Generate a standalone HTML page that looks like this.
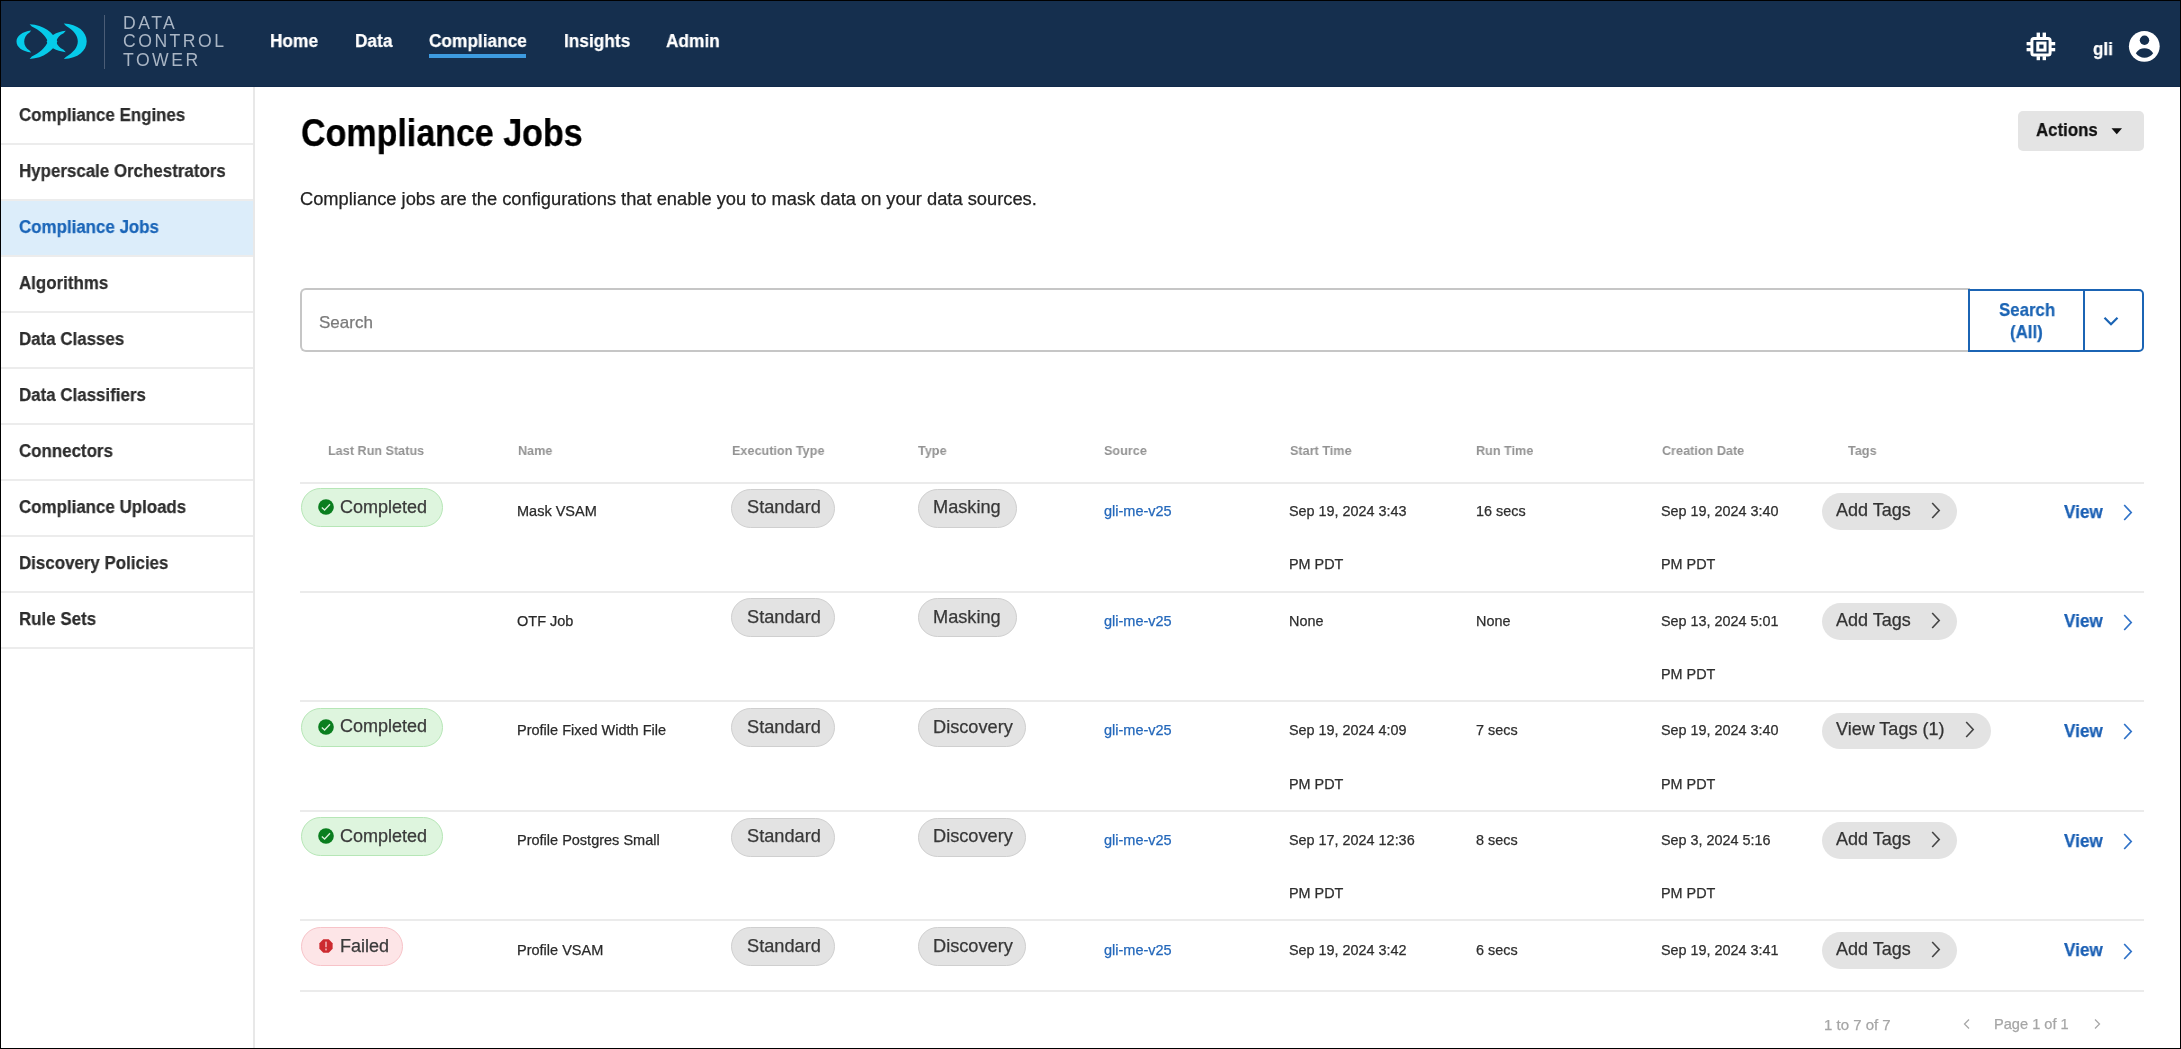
<!DOCTYPE html>
<html><head><meta charset="utf-8">
<title>Compliance Jobs</title>
<style>
html,body{margin:0;padding:0;}
body{width:2181px;height:1049px;overflow:hidden;position:relative;background:#fff;font-family:"Liberation Sans",sans-serif;color:#2e2e2e;}
.t{position:absolute;line-height:1;white-space:nowrap;will-change:transform;-webkit-text-stroke:0.25px currentColor;}
.sep{position:absolute;left:1px;width:252px;height:2px;background:#ececec;}
.line{position:absolute;height:2px;background:#ebebeb;left:300px;width:1844px;}
.pill{position:absolute;box-sizing:border-box;height:39px;border-radius:20px;background:#e3e3e3;border:1px solid #cfcfcf;}
#frame{position:absolute;left:0;top:0;width:2179px;height:1047px;border:1px solid #000;pointer-events:none;z-index:10;}
</style></head>
<body>
<div style="position:absolute;left:0;top:0;width:2181px;height:87px;background:#152f4e;"></div>
<div style="position:absolute;left:0;top:86px;width:2181px;height:1px;background:#10294a;"></div>
<svg style="position:absolute;left:0;top:0" width="100" height="87" viewBox="0 0 100 87">
<g fill="#06cbea">
<path d="M31.2 30.4 C22 31.6 16.5 36 16.5 41.5 C16.5 47 22 51.4 31.2 52.5 L29.6 50.6 C26 48.3 24.2 45.3 24.2 41.5 C24.2 37.7 26 34.6 29.6 32.4 Z"/>
<path d="M63.8 23.5 C78 24.1 86.7 31.9 86.7 41.3 C86.7 50.7 78 58.5 63.8 59.1 L65.8 56.9 C73.5 52.5 77.8 47.3 77.8 41.3 C77.8 35.3 73.5 30.1 65.8 25.7 Z"/>
<path d="M29.6 24.2 C44 25 53 32.5 57.4 41.6 C53 50.7 44 58.2 29.6 59 L31.8 56.6 C39.8 52.8 45.2 47.8 48 41.6 C45.2 35.4 39.8 30.4 31.8 26.6 Z"/>
<path d="M65.8 30.8 C55.8 32 49.2 36.4 46.6 41.6 C49.2 46.8 55.8 51.2 65.8 52.2 L63.6 49.8 C59.6 48 57.1 45.4 56.3 41.6 C57.1 37.8 59.6 35.2 63.6 33.2 Z"/>
</g></svg>
<div style="position:absolute;left:104px;top:15px;width:1px;height:54px;background:#4b5d76"></div>
<div class="t" style="left:123px;top:14px;font-size:17.6px;line-height:18.3px;letter-spacing:2.5px;color:#a9b5c4;-webkit-text-stroke:0;">DATA<br>CONTROL<br>TOWER</div>
<div class="t" style="left:270.00px;top:31.38px;font-size:19.2px;transform:scaleX(0.9);transform-origin:0 0;font-weight:700;color:#fff">Home</div>
<div class="t" style="left:355.00px;top:31.38px;font-size:19.2px;transform:scaleX(0.9);transform-origin:0 0;font-weight:700;color:#fff">Data</div>
<div class="t" style="left:429.00px;top:31.38px;font-size:19.2px;transform:scaleX(0.9);transform-origin:0 0;font-weight:700;color:#fff">Compliance</div>
<div class="t" style="left:563.50px;top:31.38px;font-size:19.2px;transform:scaleX(0.9);transform-origin:0 0;font-weight:700;color:#fff">Insights</div>
<div class="t" style="left:665.50px;top:31.38px;font-size:19.2px;transform:scaleX(0.9);transform-origin:0 0;font-weight:700;color:#fff">Admin</div>
<div style="position:absolute;left:429px;top:53.5px;width:97px;height:4px;background:#3d9be0"></div>
<svg style="position:absolute;left:2026px;top:31px" width="30" height="30" viewBox="0 0 30 30">
<rect x="5.9" y="7.4" width="18.2" height="16.5" rx="2" fill="none" stroke="#fff" stroke-width="3"/>
<rect x="11.8" y="12.1" width="7.2" height="7" fill="none" stroke="#fff" stroke-width="3"/>
<g fill="#fff">
<rect x="10.6" y="1.6" width="3.4" height="4.5"/><rect x="16.6" y="1.6" width="3.4" height="4.5"/>
<rect x="10.6" y="25.2" width="3.4" height="4"/><rect x="16.6" y="25.2" width="3.4" height="4"/>
<rect x="0.6" y="11" width="4.5" height="3.3"/><rect x="0.6" y="17" width="4.5" height="3.3"/>
<rect x="24.9" y="11" width="4.3" height="3.3"/><rect x="24.9" y="17" width="4.3" height="3.3"/>
</g></svg>
<div class="t" style="left:2093.00px;top:40.27px;font-size:18.5px;transform:scaleX(0.92);transform-origin:0 0;font-weight:700;color:#fff">gli</div>
<svg style="position:absolute;left:2128px;top:30px" width="33" height="33" viewBox="0 0 33 33">
<circle cx="16.3" cy="16.3" r="15.4" fill="#fff"/>
<circle cx="16.5" cy="10.2" r="4.7" fill="#152f4e"/>
<path d="M7.8 23.3 C10 19.6 13.3 18.3 16.5 18.3 C19.7 18.3 23 19.6 25.2 23.3 C23 26.4 19.9 27.7 16.5 27.7 C13.1 27.7 10 26.4 7.8 23.3 Z" fill="#152f4e"/>
</svg>
<div style="position:absolute;left:253px;top:87px;width:1.5px;height:962px;background:#e8e8e8"></div>
<div style="position:absolute;left:1px;top:200px;width:252px;height:56px;background:#dcedfa"></div>
<div class="t" style="left:19.00px;top:105.81px;font-size:18.8px;transform:scaleX(0.9);transform-origin:0 0;font-weight:700;color:#2d2d2d">Compliance Engines</div>
<div class="sep" style="top:143px"></div>
<div class="t" style="left:19.00px;top:161.81px;font-size:18.8px;transform:scaleX(0.9);transform-origin:0 0;font-weight:700;color:#2d2d2d">Hyperscale Orchestrators</div>
<div class="sep" style="top:199px"></div>
<div class="t" style="left:19.00px;top:217.81px;font-size:18.8px;transform:scaleX(0.9);transform-origin:0 0;font-weight:700;color:#1a65b8">Compliance Jobs</div>
<div class="sep" style="top:255px"></div>
<div class="t" style="left:19.00px;top:273.81px;font-size:18.8px;transform:scaleX(0.9);transform-origin:0 0;font-weight:700;color:#2d2d2d">Algorithms</div>
<div class="sep" style="top:311px"></div>
<div class="t" style="left:19.00px;top:329.81px;font-size:18.8px;transform:scaleX(0.9);transform-origin:0 0;font-weight:700;color:#2d2d2d">Data Classes</div>
<div class="sep" style="top:367px"></div>
<div class="t" style="left:19.00px;top:385.81px;font-size:18.8px;transform:scaleX(0.9);transform-origin:0 0;font-weight:700;color:#2d2d2d">Data Classifiers</div>
<div class="sep" style="top:423px"></div>
<div class="t" style="left:19.00px;top:441.81px;font-size:18.8px;transform:scaleX(0.9);transform-origin:0 0;font-weight:700;color:#2d2d2d">Connectors</div>
<div class="sep" style="top:479px"></div>
<div class="t" style="left:19.00px;top:497.81px;font-size:18.8px;transform:scaleX(0.9);transform-origin:0 0;font-weight:700;color:#2d2d2d">Compliance Uploads</div>
<div class="sep" style="top:535px"></div>
<div class="t" style="left:19.00px;top:553.81px;font-size:18.8px;transform:scaleX(0.9);transform-origin:0 0;font-weight:700;color:#2d2d2d">Discovery Policies</div>
<div class="sep" style="top:591px"></div>
<div class="t" style="left:19.00px;top:609.81px;font-size:18.8px;transform:scaleX(0.9);transform-origin:0 0;font-weight:700;color:#2d2d2d">Rule Sets</div>
<div class="sep" style="top:647px"></div>
<div class="t" style="left:300.50px;top:113.45px;font-size:39.0px;transform:scaleX(0.872);transform-origin:0 0;font-weight:700;color:#000">Compliance Jobs</div>
<div class="t" style="left:300.00px;top:189.74px;font-size:18.3px;color:#232323">Compliance jobs are the configurations that enable you to mask data on your data sources.</div>
<div style="position:absolute;left:2018px;top:111px;width:126px;height:40px;border-radius:5px;background:#e4e4e4"></div>
<div class="t" style="left:2036.00px;top:120.87px;font-size:18.5px;transform:scaleX(0.91);transform-origin:0 0;font-weight:700;color:#111">Actions</div>
<svg style="position:absolute;left:2111px;top:128px" width="12" height="7" viewBox="0 0 12 7"><path d="M0.5 0.3 L11 0.3 L5.75 6.3 Z" fill="#111"/></svg>
<div style="position:absolute;left:300px;top:288px;width:1670px;height:64px;box-sizing:border-box;border:2px solid #c6c6c6;border-right:none;border-radius:6px 0 0 6px"></div>
<div class="t" style="left:318.50px;top:314.13px;font-size:17.0px;color:#7a7a7a">Search</div>
<div style="position:absolute;left:1968px;top:288.5px;width:176px;height:63.5px;box-sizing:border-box;border:2.2px solid #1b64b4;border-radius:0 5px 5px 0"></div>
<div style="position:absolute;left:2082.5px;top:288.5px;width:2.2px;height:63.5px;background:#1b64b4"></div>
<div class="t" style="left:1998.50px;top:300.57px;font-size:18.5px;transform:scaleX(0.91);transform-origin:0 0;font-weight:700;color:#1b64b4">Search</div>
<div class="t" style="left:2010.00px;top:323.37px;font-size:18.5px;transform:scaleX(0.91);transform-origin:0 0;font-weight:700;color:#1b64b4">(All)</div>
<svg style="position:absolute;left:2103px;top:316px" width="16" height="11" viewBox="0 0 16 11"><path d="M1.5 1.8 L8 8.3 L14.5 1.8" fill="none" stroke="#1b64b4" stroke-width="2.2"/></svg>
<div class="t" style="left:328.00px;top:444.06px;font-size:13.3px;transform:scaleX(0.95);transform-origin:0 0;font-weight:700;color:#939393;-webkit-text-stroke:0">Last Run Status</div>
<div class="t" style="left:517.50px;top:444.06px;font-size:13.3px;transform:scaleX(0.95);transform-origin:0 0;font-weight:700;color:#939393;-webkit-text-stroke:0">Name</div>
<div class="t" style="left:732.00px;top:444.06px;font-size:13.3px;transform:scaleX(0.95);transform-origin:0 0;font-weight:700;color:#939393;-webkit-text-stroke:0">Execution Type</div>
<div class="t" style="left:918.00px;top:444.06px;font-size:13.3px;transform:scaleX(0.95);transform-origin:0 0;font-weight:700;color:#939393;-webkit-text-stroke:0">Type</div>
<div class="t" style="left:1104.30px;top:444.06px;font-size:13.3px;transform:scaleX(0.95);transform-origin:0 0;font-weight:700;color:#939393;-webkit-text-stroke:0">Source</div>
<div class="t" style="left:1290.00px;top:444.06px;font-size:13.3px;transform:scaleX(0.95);transform-origin:0 0;font-weight:700;color:#939393;-webkit-text-stroke:0">Start Time</div>
<div class="t" style="left:1476.20px;top:444.06px;font-size:13.3px;transform:scaleX(0.95);transform-origin:0 0;font-weight:700;color:#939393;-webkit-text-stroke:0">Run Time</div>
<div class="t" style="left:1661.80px;top:444.06px;font-size:13.3px;transform:scaleX(0.95);transform-origin:0 0;font-weight:700;color:#939393;-webkit-text-stroke:0">Creation Date</div>
<div class="t" style="left:1848.30px;top:444.06px;font-size:13.3px;transform:scaleX(0.95);transform-origin:0 0;font-weight:700;color:#939393;-webkit-text-stroke:0">Tags</div>
<div class="line" style="top:481.6px"></div>
<div class="line" style="top:591px"></div>
<div class="line" style="top:700px"></div>
<div class="line" style="top:810px"></div>
<div class="line" style="top:919px"></div>
<div class="line" style="top:990px"></div>
<div class="pill" style="left:301px;top:488.3px;width:142px;height:39px;background:#def5de;border-color:#b6e6b6"></div>
<div style="position:absolute;left:317.6px;top:499.3px;width:16px;height:16px"><svg width="16" height="16" viewBox="0 0 16 16"><circle cx="8" cy="8" r="7.8" fill="#0a7e1f"/><path d="M3.8 8.6 L6.6 11 L12 5.2" fill="none" stroke="#d8eed8" stroke-width="1.35"/></svg></div>
<div class="t" style="left:340.00px;top:497.79px;font-size:18.0px;color:#3a3a3a">Completed</div>
<div class="t" style="left:516.80px;top:503.85px;font-size:14.5px;color:#2a2a2a">Mask VSAM</div>
<div class="pill" style="left:731px;top:488.5px;width:104px;"></div>
<div class="t" style="left:747.00px;top:498.12px;font-size:18.2px;color:#383838">Standard</div>
<div class="pill" style="left:918px;top:488.5px;width:99px;"></div>
<div class="t" style="left:933.00px;top:498.12px;font-size:18.2px;color:#383838">Masking</div>
<div class="t" style="left:1104.30px;top:503.85px;font-size:14.5px;color:#2468bb">gli-me-v25</div>
<div class="t" style="left:1289.00px;top:503.93px;font-size:14.4px;">Sep 19, 2024 3:43</div>
<div class="t" style="left:1289.00px;top:557.13px;font-size:14.4px;">PM PDT</div>
<div class="t" style="left:1475.50px;top:503.93px;font-size:14.4px;">16 secs</div>
<div class="t" style="left:1661.00px;top:503.93px;font-size:14.4px;">Sep 19, 2024 3:40</div>
<div class="t" style="left:1661.00px;top:557.13px;font-size:14.4px;">PM PDT</div>
<div style="position:absolute;left:1821.5px;top:493.3px;width:135.5px;height:36.6px;border-radius:19px;background:#e3e3e3"></div>
<div class="t" style="left:1836.00px;top:500.79px;font-size:18.0px;color:#333">Add Tags</div>
<div style="position:absolute;left:1929.8px;top:501.8px;width:12px;height:17px"><svg width="12" height="17" viewBox="0 0 12 17"><path d="M2.2 1 L9.2 8.5 L2.2 16" fill="none" stroke="#444" stroke-width="1.6"/></svg></div>
<div class="t" style="left:2063.50px;top:502.59px;font-size:18.0px;transform:scaleX(0.95);transform-origin:0 0;font-weight:700;color:#1a5fb4">View</div>
<div style="position:absolute;left:2121.5px;top:503.8px;width:12px;height:17px"><svg width="12" height="17" viewBox="0 0 12 17"><path d="M2.2 1 L9.2 8.5 L2.2 16" fill="none" stroke="#2f72c8" stroke-width="1.7"/></svg></div>
<div class="t" style="left:516.80px;top:613.65px;font-size:14.5px;color:#2a2a2a">OTF Job</div>
<div class="pill" style="left:731px;top:598.3px;width:104px;"></div>
<div class="t" style="left:747.00px;top:607.92px;font-size:18.2px;color:#383838">Standard</div>
<div class="pill" style="left:918px;top:598.3px;width:99px;"></div>
<div class="t" style="left:933.00px;top:607.92px;font-size:18.2px;color:#383838">Masking</div>
<div class="t" style="left:1104.30px;top:613.65px;font-size:14.5px;color:#2468bb">gli-me-v25</div>
<div class="t" style="left:1289.00px;top:613.73px;font-size:14.4px;">None</div>
<div class="t" style="left:1475.50px;top:613.73px;font-size:14.4px;">None</div>
<div class="t" style="left:1661.00px;top:613.73px;font-size:14.4px;">Sep 13, 2024 5:01</div>
<div class="t" style="left:1661.00px;top:666.93px;font-size:14.4px;">PM PDT</div>
<div style="position:absolute;left:1821.5px;top:603.1px;width:135.5px;height:36.6px;border-radius:19px;background:#e3e3e3"></div>
<div class="t" style="left:1836.00px;top:610.59px;font-size:18.0px;color:#333">Add Tags</div>
<div style="position:absolute;left:1929.8px;top:611.6px;width:12px;height:17px"><svg width="12" height="17" viewBox="0 0 12 17"><path d="M2.2 1 L9.2 8.5 L2.2 16" fill="none" stroke="#444" stroke-width="1.6"/></svg></div>
<div class="t" style="left:2063.50px;top:612.39px;font-size:18.0px;transform:scaleX(0.95);transform-origin:0 0;font-weight:700;color:#1a5fb4">View</div>
<div style="position:absolute;left:2121.5px;top:613.6px;width:12px;height:17px"><svg width="12" height="17" viewBox="0 0 12 17"><path d="M2.2 1 L9.2 8.5 L2.2 16" fill="none" stroke="#2f72c8" stroke-width="1.7"/></svg></div>
<div class="pill" style="left:301px;top:707.8px;width:142px;height:39px;background:#def5de;border-color:#b6e6b6"></div>
<div style="position:absolute;left:317.6px;top:718.8px;width:16px;height:16px"><svg width="16" height="16" viewBox="0 0 16 16"><circle cx="8" cy="8" r="7.8" fill="#0a7e1f"/><path d="M3.8 8.6 L6.6 11 L12 5.2" fill="none" stroke="#d8eed8" stroke-width="1.35"/></svg></div>
<div class="t" style="left:340.00px;top:717.29px;font-size:18.0px;color:#3a3a3a">Completed</div>
<div class="t" style="left:516.80px;top:723.35px;font-size:14.5px;color:#2a2a2a">Profile Fixed Width File</div>
<div class="pill" style="left:731px;top:708.0px;width:104px;"></div>
<div class="t" style="left:747.00px;top:717.62px;font-size:18.2px;color:#383838">Standard</div>
<div class="pill" style="left:918px;top:708.0px;width:108px;"></div>
<div class="t" style="left:933.00px;top:717.62px;font-size:18.2px;color:#383838">Discovery</div>
<div class="t" style="left:1104.30px;top:723.35px;font-size:14.5px;color:#2468bb">gli-me-v25</div>
<div class="t" style="left:1289.00px;top:723.43px;font-size:14.4px;">Sep 19, 2024 4:09</div>
<div class="t" style="left:1289.00px;top:776.63px;font-size:14.4px;">PM PDT</div>
<div class="t" style="left:1475.50px;top:723.43px;font-size:14.4px;">7 secs</div>
<div class="t" style="left:1661.00px;top:723.43px;font-size:14.4px;">Sep 19, 2024 3:40</div>
<div class="t" style="left:1661.00px;top:776.63px;font-size:14.4px;">PM PDT</div>
<div style="position:absolute;left:1821.5px;top:712.8px;width:169.5px;height:36.6px;border-radius:19px;background:#e3e3e3"></div>
<div class="t" style="left:1836.00px;top:720.29px;font-size:18.0px;color:#333">View Tags (1)</div>
<div style="position:absolute;left:1963.8px;top:721.3px;width:12px;height:17px"><svg width="12" height="17" viewBox="0 0 12 17"><path d="M2.2 1 L9.2 8.5 L2.2 16" fill="none" stroke="#444" stroke-width="1.6"/></svg></div>
<div class="t" style="left:2063.50px;top:722.09px;font-size:18.0px;transform:scaleX(0.95);transform-origin:0 0;font-weight:700;color:#1a5fb4">View</div>
<div style="position:absolute;left:2121.5px;top:723.3px;width:12px;height:17px"><svg width="12" height="17" viewBox="0 0 12 17"><path d="M2.2 1 L9.2 8.5 L2.2 16" fill="none" stroke="#2f72c8" stroke-width="1.7"/></svg></div>
<div class="pill" style="left:301px;top:817.4px;width:142px;height:39px;background:#def5de;border-color:#b6e6b6"></div>
<div style="position:absolute;left:317.6px;top:828.4px;width:16px;height:16px"><svg width="16" height="16" viewBox="0 0 16 16"><circle cx="8" cy="8" r="7.8" fill="#0a7e1f"/><path d="M3.8 8.6 L6.6 11 L12 5.2" fill="none" stroke="#d8eed8" stroke-width="1.35"/></svg></div>
<div class="t" style="left:340.00px;top:826.89px;font-size:18.0px;color:#3a3a3a">Completed</div>
<div class="t" style="left:516.80px;top:832.95px;font-size:14.5px;color:#2a2a2a">Profile Postgres Small</div>
<div class="pill" style="left:731px;top:817.6px;width:104px;"></div>
<div class="t" style="left:747.00px;top:827.22px;font-size:18.2px;color:#383838">Standard</div>
<div class="pill" style="left:918px;top:817.6px;width:108px;"></div>
<div class="t" style="left:933.00px;top:827.22px;font-size:18.2px;color:#383838">Discovery</div>
<div class="t" style="left:1104.30px;top:832.95px;font-size:14.5px;color:#2468bb">gli-me-v25</div>
<div class="t" style="left:1289.00px;top:833.03px;font-size:14.4px;">Sep 17, 2024 12:36</div>
<div class="t" style="left:1289.00px;top:886.23px;font-size:14.4px;">PM PDT</div>
<div class="t" style="left:1475.50px;top:833.03px;font-size:14.4px;">8 secs</div>
<div class="t" style="left:1661.00px;top:833.03px;font-size:14.4px;">Sep 3, 2024 5:16</div>
<div class="t" style="left:1661.00px;top:886.23px;font-size:14.4px;">PM PDT</div>
<div style="position:absolute;left:1821.5px;top:822.4px;width:135.5px;height:36.6px;border-radius:19px;background:#e3e3e3"></div>
<div class="t" style="left:1836.00px;top:829.89px;font-size:18.0px;color:#333">Add Tags</div>
<div style="position:absolute;left:1929.8px;top:830.9px;width:12px;height:17px"><svg width="12" height="17" viewBox="0 0 12 17"><path d="M2.2 1 L9.2 8.5 L2.2 16" fill="none" stroke="#444" stroke-width="1.6"/></svg></div>
<div class="t" style="left:2063.50px;top:831.69px;font-size:18.0px;transform:scaleX(0.95);transform-origin:0 0;font-weight:700;color:#1a5fb4">View</div>
<div style="position:absolute;left:2121.5px;top:832.9px;width:12px;height:17px"><svg width="12" height="17" viewBox="0 0 12 17"><path d="M2.2 1 L9.2 8.5 L2.2 16" fill="none" stroke="#2f72c8" stroke-width="1.7"/></svg></div>
<div class="pill" style="left:301px;top:926.9px;width:102px;height:39px;background:#fde5e7;border-color:#f7c3c8"></div>
<div style="position:absolute;left:318.7px;top:938.8px;width:14px;height:14px"><svg width="14" height="14" viewBox="0 0 15 15"><path d="M4.6 0.4 L10.4 0.4 L14.6 4.6 L14.6 10.4 L10.4 14.6 L4.6 14.6 L0.4 10.4 L0.4 4.6 Z" fill="#cc2a2f"/><rect x="6.6" y="2.8" width="1.8" height="6" fill="#eea8ab"/><rect x="6.6" y="10.2" width="1.8" height="2" fill="#eea8ab"/></svg></div>
<div class="t" style="left:340.00px;top:936.69px;font-size:18.0px;color:#3a3a3a">Failed</div>
<div class="t" style="left:516.80px;top:942.75px;font-size:14.5px;color:#2a2a2a">Profile VSAM</div>
<div class="pill" style="left:731px;top:927.4px;width:104px;"></div>
<div class="t" style="left:747.00px;top:937.02px;font-size:18.2px;color:#383838">Standard</div>
<div class="pill" style="left:918px;top:927.4px;width:108px;"></div>
<div class="t" style="left:933.00px;top:937.02px;font-size:18.2px;color:#383838">Discovery</div>
<div class="t" style="left:1104.30px;top:942.75px;font-size:14.5px;color:#2468bb">gli-me-v25</div>
<div class="t" style="left:1289.00px;top:942.83px;font-size:14.4px;">Sep 19, 2024 3:42</div>
<div class="t" style="left:1475.50px;top:942.83px;font-size:14.4px;">6 secs</div>
<div class="t" style="left:1661.00px;top:942.83px;font-size:14.4px;">Sep 19, 2024 3:41</div>
<div style="position:absolute;left:1821.5px;top:932.2px;width:135.5px;height:36.6px;border-radius:19px;background:#e3e3e3"></div>
<div class="t" style="left:1836.00px;top:939.69px;font-size:18.0px;color:#333">Add Tags</div>
<div style="position:absolute;left:1929.8px;top:940.7px;width:12px;height:17px"><svg width="12" height="17" viewBox="0 0 12 17"><path d="M2.2 1 L9.2 8.5 L2.2 16" fill="none" stroke="#444" stroke-width="1.6"/></svg></div>
<div class="t" style="left:2063.50px;top:941.49px;font-size:18.0px;transform:scaleX(0.95);transform-origin:0 0;font-weight:700;color:#1a5fb4">View</div>
<div style="position:absolute;left:2121.5px;top:942.7px;width:12px;height:17px"><svg width="12" height="17" viewBox="0 0 12 17"><path d="M2.2 1 L9.2 8.5 L2.2 16" fill="none" stroke="#2f72c8" stroke-width="1.7"/></svg></div>
<div class="t" style="left:1824.30px;top:1016.53px;font-size:15.0px;color:#a6a6a6">1 to 7 of 7</div>
<svg style="position:absolute;left:1962px;top:1018px" width="9" height="12" viewBox="0 0 9 12"><path d="M7 1.5 L2.5 6 L7 10.5" fill="none" stroke="#a8a8a8" stroke-width="1.3"/></svg>
<div class="t" style="left:1994.00px;top:1016.86px;font-size:14.6px;color:#a6a6a6">Page 1 of 1</div>
<svg style="position:absolute;left:2093px;top:1018px" width="9" height="12" viewBox="0 0 9 12"><path d="M2 1.5 L6.5 6 L2 10.5" fill="none" stroke="#a8a8a8" stroke-width="1.3"/></svg>
<div id="frame"></div>
</body></html>
